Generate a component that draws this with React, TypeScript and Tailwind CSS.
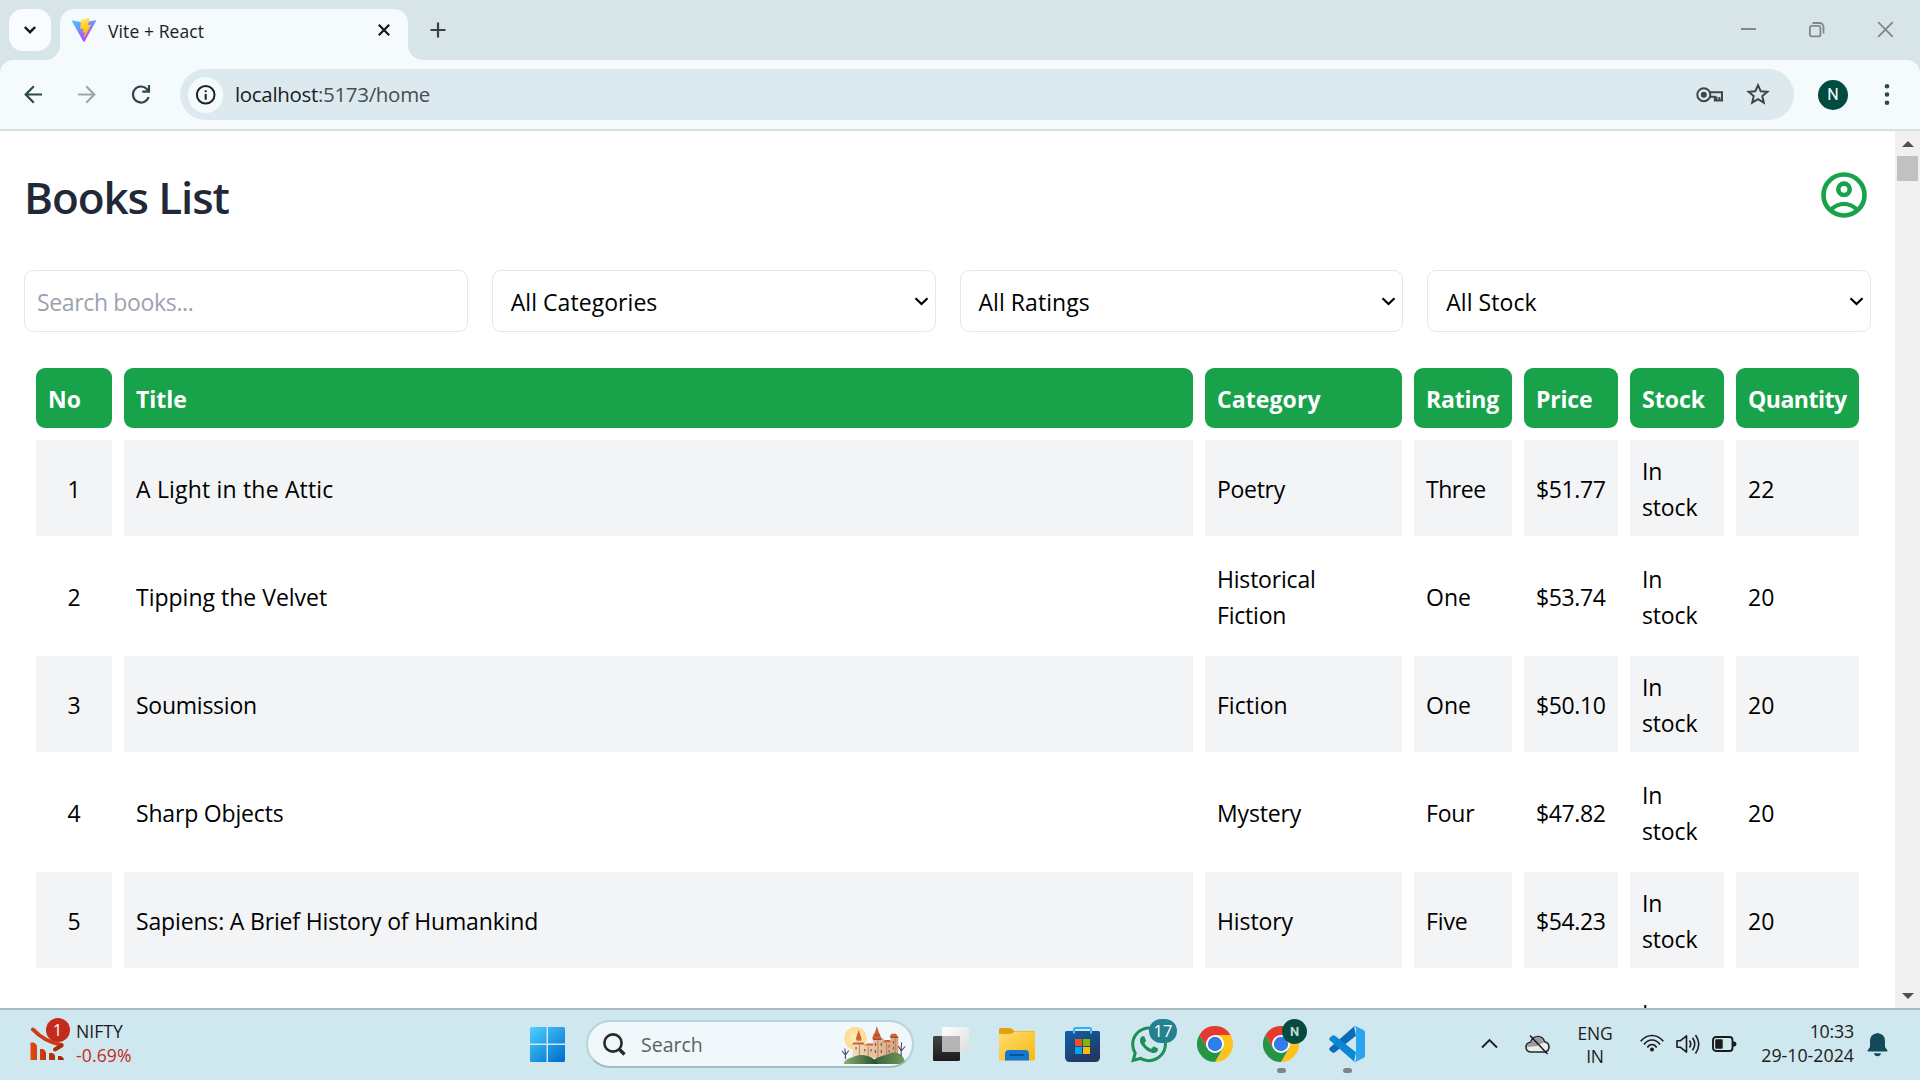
import React from "react";
import { FaWhatsapp } from "react-icons/fa";

type Cell = { text: string; track?: string };
type Book = { title: Cell; category: Cell; rating: Cell; price: string; quantity: string };

const BOOKS: Book[] = [
  { title: { text: "A Light in the Attic", track: "tracking-[0.18px]" }, category: { text: "Poetry", track: "tracking-[-0.3px]" }, rating: { text: "Three", track: "tracking-[-0.45px]" }, price: "$51.77", quantity: "22" },
  { title: { text: "Tipping the Velvet" }, category: { text: "Historical Fiction", track: "tracking-[-0.2px]" }, rating: { text: "One" }, price: "$53.74", quantity: "20" },
  { title: { text: "Soumission", track: "tracking-[-0.25px]" }, category: { text: "Fiction" }, rating: { text: "One" }, price: "$50.10", quantity: "20" },
  { title: { text: "Sharp Objects", track: "tracking-[-0.18px]" }, category: { text: "Mystery", track: "tracking-[-0.15px]" }, rating: { text: "Four", track: "tracking-[-0.2px]" }, price: "$47.82", quantity: "20" },
  { title: { text: "Sapiens: A Brief History of Humankind", track: "tracking-[-0.16px]" }, category: { text: "History", track: "tracking-[-0.1px]" }, rating: { text: "Five", track: "tracking-[-0.1px]" }, price: "$54.23", quantity: "20" },
  { title: { text: "The Requiem Red" }, category: { text: "Young Adult" }, rating: { text: "One" }, price: "$22.65", quantity: "19" },
];

const HEADERS = [
  { label: "No", track: "" },
  { label: "Title", track: "" },
  { label: "Category", track: "tracking-[0.1px]" },
  { label: "Rating", track: "tracking-[-0.2px]" },
  { label: "Price", track: "tracking-[-0.2px]" },
  { label: "Stock", track: "" },
  { label: "Quantity", track: "tracking-[-0.5px]" },
];

function TabStrip() {
  return (
    <div className="flex h-[60px] bg-[#d7e4e8] pl-[9px]">
      <button className="mt-[9px] flex h-[42px] w-[42px] items-center justify-center rounded-[14px] bg-[#f8fcfe]">
        <svg width="14" height="10" viewBox="0 0 14 10" fill="none" stroke="#15181a" strokeWidth="2.4">
          <path d="M1.8 2 7 7.2 12.2 2" />
        </svg>
      </button>
      <div className="relative ml-[9px] mt-[9px] flex h-[51px] w-[348px] items-start rounded-t-[14px] bg-[#f5fafd]">
        <svg className="absolute -left-[15px] bottom-0" width="15" height="15">
          <path d="M15 0V15H0A15 15 0 0 0 15 0Z" fill="#f5fafd" />
        </svg>
        <svg className="absolute -right-[15px] bottom-0" width="15" height="15">
          <path d="M0 0V15H15A15 15 0 0 1 0 0Z" fill="#f5fafd" />
        </svg>
        <svg className="ml-[12px] mt-[9px]" width="24" height="24" viewBox="0 0 24 24">
          <defs>
            <linearGradient id="viteA" x1="0" y1="0" x2="0.6" y2="1">
              <stop offset="0" stopColor="#41d1ff" />
              <stop offset="1" stopColor="#bd34fe" />
            </linearGradient>
            <linearGradient id="viteB" x1="0.4" y1="0" x2="0.6" y2="1">
              <stop offset="0" stopColor="#ffea83" />
              <stop offset="0.2" stopColor="#ffdd35" />
              <stop offset="1" stopColor="#ffa800" />
            </linearGradient>
          </defs>
          <path d="M23.9 3.2 12.5 23.6a.6.6 0 0 1-1.1 0L.1 3.4c-.3-.5.1-1 .6-.9L12 4.500 23.300 2.300c.5-.1.9.4.6.9Z" fill="url(#viteA)" />
          <path d="M17.300.05 9 1.700a.3.3 0 0 0-.25.3l-.5 8.700c0 .2.200.4.4.3l2.300-.5c.2 0 .4.1.4.350L10.700 14.200c0 .2.100.4.350.350l1.400-.4c.25-.1.450.1.400.350l-1.100 5.300c-.1.3.350.5.550.200L19 7.100c.1-.2-.1-.5-.3-.450l-2.400.450c-.2 0-.4-.150-.350-.4L17.500.4c.1-.2 0-.4-.2-.350Z" fill="url(#viteB)" />
        </svg>
        <span className="ml-[12px] mt-[9px] text-[17.5px] leading-[26px] tracking-[0.1px] text-[#1d2022]">Vite + React</span>
        <svg className="absolute left-[318px] top-[15px]" width="12" height="12" viewBox="0 0 12 12" stroke="#15181a" strokeWidth="2.2">
          <path d="M.8.8 11.200 11.200M11.200.8.8 11.200" />
        </svg>
      </div>
      <svg className="ml-[22px] mt-[22px]" width="16" height="16" viewBox="0 0 16 16" stroke="#3a4245" strokeWidth="2.2">
        <path d="M8 .5V15.500M.5 8H15.500" />
      </svg>
      <div className="ml-auto flex pr-[26px] pt-[21px]">
        <svg width="17" height="17" viewBox="0 0 17 17" stroke="#7f898c" strokeWidth="2">
          <path d="M1 8H16" />
        </svg>
        <svg className="ml-[51px]" width="17" height="17" viewBox="0 0 17 17" fill="none" stroke="#7f898c" strokeWidth="1.8">
          <rect x="1.900" y="4.900" width="10.500" height="10.500" rx="2" />
          <path d="M4.500 2H11.500A4 4 0 0 1 15.500 6V12.500" />
        </svg>
        <svg className="ml-[52px]" width="17" height="17" viewBox="0 0 17 17" stroke="#7f898c" strokeWidth="1.8">
          <path d="M1.200 1.200 15.800 15.800M15.800 1.200 1.200 15.800" />
        </svg>
      </div>
    </div>
  );
}

function Toolbar() {
  return (
    <div className="h-[71px] bg-[#d7e4e8]">
      <div className="flex h-[71px] items-start rounded-t-[13px] border-b-2 border-[#d5e1e3] bg-[#f5fafd]">
        <svg className="ml-[24px] mt-[25px]" width="19" height="19" viewBox="0 0 19 19" fill="none" stroke="#2c474d" strokeWidth="2.2">
          <path d="M18 9.500H2M9.800 1.300 1.700 9.500 9.800 17.700" />
        </svg>
        <svg className="ml-[34px] mt-[25px]" width="19" height="19" viewBox="0 0 19 19" fill="none" stroke="#a0a7a9" strokeWidth="2.200">
          <path d="M1 9.500H17M9.200 1.300 17.300 9.500 9.200 17.700" />
        </svg>
        <svg className="ml-[35px] mt-[25px]" width="20" height="20" viewBox="0 0 20 20" fill="none" stroke="#2c474d" strokeWidth="2.200">
          <path d="M17.600 12A8 8 0 1 1 15.800 4L18 6.400M18 0V6.600H11.300" />
        </svg>
        <div className="ml-[29px] mt-[9px] flex h-[51px] w-[1614px] items-center rounded-full bg-[#dceaef] pl-[8px]">
          <div className="flex h-[36px] w-[35px] items-center justify-center rounded-full bg-[#f5fafd]">
            <svg width="20" height="20" viewBox="0 0 20 20" fill="none" stroke="#1c2022" strokeWidth="2">
              <circle cx="9.700" cy="9.800" r="8.800" />
              <path d="M9.700 9V14.800M9.700 5.200V7.200" />
            </svg>
          </div>
          <span className="-mt-[2px] ml-[12px] text-[20.5px] leading-[28px] tracking-[-0.32px] text-[#474d50]">
            <span className="text-[#191c1e]">localhost</span>:5173/home
          </span>
          <svg className="ml-auto" width="28" height="16" viewBox="0 0 28 16" fill="none" stroke="#3d4649" strokeWidth="2">
            <path d="M14 5.200H26V13.600H20.500V9.600M14 9.800H18.800V13.600H21M23.400 10V13" />
            <circle cx="7.800" cy="7.700" r="6.500" />
            <circle cx="7.800" cy="7.700" r="3" fill="#3d4649" stroke="none" />
          </svg>
          <svg className="-mt-[2px] ml-[22px] mr-[24px]" width="24" height="22" viewBox="0 0 24 22" fill="none" stroke="#3d4649" strokeWidth="2">
            <path d="M12 2.200 14.700 8.200 21.400 8.800 16.300 13.100 17.800 19.600 12 16.100 6.200 19.600 7.700 13.100 2.600 8.800 9.300 8.200Z" />
          </svg>
        </div>
        <div className="ml-[24px] mt-[20px] flex h-[30px] w-[30px] items-center justify-center rounded-full bg-[#004d40] font-['Roboto'] text-[16px] leading-[22px] text-white">N</div>
        <svg className="ml-[36px] mt-[23px]" width="6" height="24" viewBox="0 0 6 24" fill="#2c474d">
          <circle cx="3" cy="3.200" r="2.300" />
          <circle cx="3" cy="11.500" r="2.300" />
          <circle cx="3" cy="19.800" r="2.300" />
        </svg>
      </div>
    </div>
  );
}

function FilterSelect({ label }: { label: string }) {
  return (
    <div className="flex h-[62px] items-center justify-between rounded-[9px] border border-[#e5e7eb] pl-[18px] pr-[6px]">
      <span className="pt-px text-[23px] leading-[36px] tracking-[0.05px] text-black">{label}</span>
      <svg width="15" height="9" viewBox="0 0 15 9" fill="none" stroke="#000" strokeWidth="2.200">
        <path d="M1.500 1.200 7.500 7 13.500 1.200" />
      </svg>
    </div>
  );
}

function BooksPage() {
  return (
    <div className="flex h-[877px] overflow-hidden bg-white">
      <main className="w-[1895px] px-6">
        <div className="flex h-[128px] items-center justify-between pr-1">
          <h1 className="pt-[4px] text-[44px] font-semibold leading-[54px] tracking-[-1.1px] text-[#1f2937]">Books List</h1>
          <svg width="46" height="46" viewBox="0 0 46 46" fill="none" stroke="#18a34a">
            <circle cx="23" cy="23" r="20.500" strokeWidth="4.600" />
            <circle cx="23" cy="17.300" r="5.700" strokeWidth="4.600" />
            <path d="M9.500 37.800Q23 26 36.500 37.800" strokeWidth="4.200" />
          </svg>
        </div>
        <div className="mt-[11px] grid grid-cols-4 gap-6">
          <div className="h-[62px] rounded-[9px] border border-[#e5e7eb] px-3 pt-[13px]">
            <input className="h-[36px] w-full text-[23px] tracking-[-0.35px] text-black outline-none placeholder:text-[#9ca3af]" placeholder="Search books..." />
          </div>
          <FilterSelect label="All Categories" />
          <FilterSelect label="All Ratings" />
          <FilterSelect label="All Stock" />
        </div>
        <table className="mt-6 w-[1847px] table-fixed border-separate border-spacing-[12px] text-[23px] leading-[36px] text-black">
          <colgroup>
            <col className="w-[76px]" />
            <col className="w-[1069px]" />
            <col className="w-[197px]" />
            <col className="w-[98px]" />
            <col className="w-[94px]" />
            <col className="w-[94px]" />
            <col className="w-[123px]" />
          </colgroup>
          <thead>
            <tr>
              {HEADERS.map((h) => (
                <th key={h.label} className={`rounded-[9px] bg-[#18a34a] px-3 pb-[11px] pt-[13px] text-left font-bold text-white ${h.track}`}>
                  {h.label}
                </th>
              ))}
            </tr>
          </thead>
          <tbody>
            {BOOKS.map((b, i) => (
              <tr key={b.title.text} className="h-[96px] last:[&>td]:pt-[15px]! [&:nth-child(odd)>td]:bg-[#f3f4f6] [&>td]:px-3 [&>td]:pb-[11px] [&>td]:pt-[13px]">
                <td className="text-center">{i + 1}</td>
                <td className={b.title.track ?? ""}>{b.title.text}</td>
                <td className={b.category.track ?? ""}>{b.category.text}</td>
                <td className={b.rating.track ?? ""}>{b.rating.text}</td>
                <td className="tracking-[-0.4px]">{b.price}</td>
                <td className="tracking-[-0.15px]">In stock</td>
                <td>{b.quantity}</td>
              </tr>
            ))}
          </tbody>
        </table>
      </main>
      <aside className="flex w-[25px] flex-col items-center bg-[#f0f0f0]">
        <svg className="mt-[10px]" width="12" height="6" viewBox="0 0 12 6">
          <path d="M0 6 6 0 12 6Z" fill="#505050" />
        </svg>
        <div className="mt-[9px] h-[25px] w-[21px] bg-[#c1c1c1]" />
        <svg className="mb-[9px] mt-auto" width="12" height="6" viewBox="0 0 12 6">
          <path d="M0 0 6 6 12 0Z" fill="#505050" />
        </svg>
      </aside>
    </div>
  );
}

function ChromeLogo() {
  return (
    <svg width="36" height="36" viewBox="0 0 36 36">
      <path d="M2.410 9A18 18 0 0 1 33.590 9H18V18L10.210 22.500Z" fill="#e33b2e" />
      <path d="M33.590 9A18 18 0 0 1 18 36L25.790 22.500 18 18V9Z" fill="#fcc31e" />
      <path d="M18 36A18 18 0 0 1 2.410 9L10.210 22.500 18 18 25.790 22.500Z" fill="#269445" />
      <circle cx="18" cy="18" r="9" fill="#fff" />
      <circle cx="18" cy="18" r="7.200" fill="#2f7de9" />
    </svg>
  );
}

function Castle() {
  return (
    <svg width="66" height="38" viewBox="0 0 68 38" preserveAspectRatio="none">
      <defs>
        <radialGradient id="sun">
          <stop offset="0" stopColor="#fff0bd" />
          <stop offset="1" stopColor="#fbdb8f" />
        </radialGradient>
        <linearGradient id="wall" x1="0" x2="1">
          <stop offset="0" stopColor="#f6dcb8" />
          <stop offset="1" stopColor="#d6a47c" />
        </linearGradient>
        <linearGradient id="hill" x1="0" x2="1">
          <stop offset="0" stopColor="#8fae6c" />
          <stop offset="1" stopColor="#1f4a30" />
        </linearGradient>
        <linearGradient id="hill2" x1="0" x2="1">
          <stop offset="0" stopColor="#2c5a38" />
          <stop offset="1" stopColor="#6f9a58" />
        </linearGradient>
      </defs>
      <circle cx="15" cy="12.500" r="11.500" fill="url(#sun)" />
      <path d="M12 18H23V32H12ZM16 13H20.500V20H16ZM22 19H33V32H22ZM33 12H44V32H33ZM44 16H53V32H44ZM51 11H59V30H51Z" fill="url(#wall)" />
      <path d="M19 19V32M28 21V32M38 14V32M47 17V32M56 12V30" stroke="#b98560" strokeWidth="1" />
      <path d="M18.200 4 21.500 13.500H15ZM11 18.500 13 16.500H23L24.500 18.500ZM24 19.500 27 17.500H33V19.500ZM32 13 33.500 8.500 35.200 6 36.800 0 39 6 40 8.500 42 13ZM43 16.200 45 14H51V16.200ZM50 11 52 7.800H56.500L59 11Z" fill="#cd6132" />
      <path d="M34 9H40M16 14H21M33 13.500H42M51 11.500H59" stroke="#97452b" strokeWidth="1" />
      <path d="M15.500 21V23.500M24.500 23V25.500M31 23V25.500M35.500 17V20M41.500 17V20M35.500 24V27M41.500 24V27M49.500 19V21.500M49.500 24V26.500M54 15V17.500M54 21V23.500" stroke="#7b5568" strokeWidth="1.200" />
      <path d="M30 38C34 31 43 30 49 28 56 25 62 27 65 33 66 36 62 38 58 38Z" fill="url(#hill2)" />
      <path d="M3 38C3 33 10 32 15 30 24 27 34 31 38 38Z" fill="url(#hill)" />
      <path d="M4.500 33V27M4.500 29 1 25M4.500 29 8 24.500M4.500 27 4 22.500M62 30V22M62 25 59 20M62 25 66 20.500M62 22 62.500 16.500" stroke="#4b3a66" strokeWidth="1.100" fill="none" />
    </svg>
  );
}

function Widget() {
  return (
    <div className="flex w-[510px] items-start">
      <div className="relative ml-[30px] mt-[17px] h-[36px] w-[40px]">
        <svg width="36" height="36" viewBox="0 0 36 36">
          <defs>
            <linearGradient id="bars" x1="0" x2="1">
              <stop offset="0" stopColor="#e2470f" />
              <stop offset="1" stopColor="#9c2610" />
            </linearGradient>
          </defs>
          <path d="M3 2.500C10 10 19 15.500 31.500 18" fill="none" stroke="#cb3d12" strokeWidth="4" strokeLinecap="round" />
          <path d="M31.500 18.500 25 22.500" stroke="#ad2c10" strokeWidth="4" strokeLinecap="round" />
          <path d="M.5 15.500H3.500Q7 17 7 20V33H.5ZM10 22H13Q16 23.500 16 26V33H10ZM19 26H22Q25 27 25 29.500V33H19ZM28 29H31Q34 30.500 34 33H28Z" fill="url(#bars)" />
        </svg>
        <span className="absolute left-[15.500px] top-[-9.500px] flex h-[24px] w-[24px] items-center justify-center rounded-full bg-[#c42b1c] text-[16px] leading-[22px] text-white">1</span>
      </div>
      <div className="ml-[6px] mt-[9px] text-[17.600px] leading-[24px]">
        <div className="text-[#1a1c1d]">NIFTY</div>
        <div className="tracking-[0.100px] text-[#c42b1c]">-0.69%</div>
      </div>
    </div>
  );
}

function Slot({ children, running }: { children: React.ReactNode; running?: boolean }) {
  return (
    <div className="relative flex h-full w-[66px] justify-center pt-[16px]">
      {children}
      {running && <span className="absolute bottom-[7px] left-[29px] h-[5px] w-[9px] rounded-full bg-[#7c8688]" />}
    </div>
  );
}

function Taskbar() {
  return (
    <footer className="flex h-[72px] border-t-2 border-[#a9b8bc] bg-[#cfe7ee]">
      <Widget />
      <svg className="ml-[20px] mt-[17px]" width="35" height="35" viewBox="0 0 35 35">
        <defs>
          <linearGradient id="win" gradientUnits="userSpaceOnUse" x1="0" y1="0" x2="30" y2="35">
            <stop offset="0" stopColor="#4fd0ff" />
            <stop offset="1" stopColor="#0072cf" />
          </linearGradient>
        </defs>
        <path d="M1.500 0H16.500V16.500H0V1.500Q0 0 1.500 0ZM18 0H33.500Q35 0 35 1.500V16.500H18ZM0 18H16.500V35H1.500Q0 35 0 33.500ZM18 18H35V33.500Q35 35 33.500 35H18Z" fill="url(#win)" />
      </svg>
      <div className="ml-[21px] mt-[10px] flex h-[48px] w-[328px] items-center rounded-full border-2 border-b-[#a3bbc1] border-l-[#b9d2d8] border-r-[#b9d2d8] border-t-[#b9d5dc] bg-[#f0f8fb]">
        <svg className="ml-[15px]" width="23" height="23" viewBox="0 0 23 23" fill="none" stroke="#27292a" strokeWidth="2.600">
          <circle cx="10" cy="10" r="8.600" />
          <path d="M16 16 21.500 21.500" strokeWidth="3.400" />
        </svg>
        <span className="ml-[15px] mt-px text-[19.500px] leading-[28px] text-[#5b6163]">Search</span>
        <div className="ml-auto mr-[5px] pt-[1px]">
          <Castle />
        </div>
      </div>
      <div className="ml-[4px] flex">
        <Slot>
          <svg width="36" height="36" viewBox="0 0 36 36">
            <defs>
              <linearGradient id="tvA" x1="0" y1="0" x2="0" y2="1">
                <stop offset="0" stopColor="#444" />
                <stop offset="1" stopColor="#1b1b1b" />
              </linearGradient>
              <linearGradient id="tvB" x1="0" y1="0" x2="1" y2="1">
                <stop offset="0" stopColor="#fff" />
                <stop offset="1" stopColor="#dcdcdc" />
              </linearGradient>
            </defs>
            <rect x="0" y="10" width="27" height="25" rx="1.500" fill="url(#tvA)" />
            <rect x="9" y="1" width="27" height="25" rx="1.500" fill="url(#tvB)" />
            <path d="M9 10H27V26H10.500Q9 26 9 24.500Z" fill="#b5b5b5" />
          </svg>
        </Slot>
        <Slot>
          <svg width="36" height="36" viewBox="0 0 36 36">
            <defs>
              <linearGradient id="fold" x1="0" y1="0" x2="1" y2="1">
                <stop offset="0" stopColor="#ffdc73" />
                <stop offset="1" stopColor="#f8b90c" />
              </linearGradient>
            </defs>
            <path d="M0 3.500Q0 2 1.500 2H10.500Q12 2 13 3L15.500 5H34.500Q36 5 36 6.500V12H0Z" fill="#e0a30e" />
            <path d="M0 8H11Q12.500 8 13.500 7L15.500 5.500H34.500Q36 5.500 36 7V32.500Q36 34.500 34.500 34.500H1.500Q0 34.500 0 33Z" fill="url(#fold)" />
            <path d="M6 34.500V28Q6 24 10 24H26Q30 24 30 28V34.500Z" fill="#1279cf" />
            <path d="M11.500 29H24.500" stroke="#07539a" strokeWidth="2" strokeLinecap="round" />
          </svg>
        </Slot>
        <Slot>
          <svg className="mr-[1px]" width="35" height="36" viewBox="0 0 35 36">
            <defs>
              <linearGradient id="store" x1="0" y1="0" x2="0.600" y2="1">
                <stop offset="0" stopColor="#0f61ae" />
                <stop offset="1" stopColor="#23375f" />
              </linearGradient>
            </defs>
            <path d="M9 8V3.500Q9 2 10.500 2H24.500Q26 2 26 3.500V8" fill="none" stroke="#2fb4ee" strokeWidth="2" />
            <path d="M0 6.500Q0 5 1.500 5H33.500Q35 5 35 6.500V31Q35 36 30 36H5Q0 36 0 31Z" fill="url(#store)" />
            <path d="M9 5V7.500M26 5V7.500" stroke="#4cc4f5" strokeWidth="2" />
            <path d="M10 13H17V20H10Z" fill="#f25022" />
            <path d="M18 13H25V20H18Z" fill="#7fba00" />
            <path d="M10 21H17V28H10Z" fill="#00a4ef" />
            <path d="M18 21H25V28H18Z" fill="#ffb900" />
          </svg>
        </Slot>
        <Slot>
          <FaWhatsapp className="-mt-[2.5px] h-[41px] w-[36px] shrink-0 text-[#1d8f57]" />
          <span className="absolute left-[33px] top-[9px] flex h-[24px] w-[28px] items-center justify-center rounded-full bg-[#25808f] text-[16.500px] leading-[22px] text-white">17</span>
        </Slot>
        <Slot>
          <ChromeLogo />
        </Slot>
        <Slot running>
          <ChromeLogo />
          <span className="absolute left-[34px] top-[9px] flex h-[25px] w-[25px] items-center justify-center rounded-full bg-[#054c40] font-['Roboto'] text-[13px] font-bold leading-[18px] text-[#c5d8d5]">N</span>
        </Slot>
        <Slot running>
          <svg width="36" height="36" viewBox="0 0 36 36">
            <path d="M25 .5 27 9.800 6 26.200Q4.500 27.200 3 26.200L.8 24.200Q-.4 23 .8 21.800Z" fill="#0b6cb5" />
            <path d="M25 35.500 27 26.200 6 9.800Q4.500 8.800 3 9.800L.8 11.800Q-.4 13 .8 14.200Z" fill="#0c87d4" />
            <path d="M26.300 0 34.500 3.900Q36 4.700 36 6.300V29.700Q36 31.300 34.500 32.100L26.300 36Q24.800 36.300 24.300 35.300 27 36.300 27 33V3Q27-.3 24.300.7 24.800-.3 26.300 0Z" fill="#2aa5ee" />
          </svg>
        </Slot>
      </div>
      <div className="ml-auto flex items-start pr-[32px]">
        <svg className="mt-[28px]" width="17" height="11" viewBox="0 0 17 11" fill="none" stroke="#1a1c1d" strokeWidth="1.900">
          <path d="M1 9.500 8.500 2 16 9.500" />
        </svg>
        <svg className="ml-[27px] mt-[24px]" width="25" height="21" viewBox="0 0 25 21" fill="none">
          <path d="M5.500 18Q1 17.500 1 13 1.200 9 5.500 8.300 7.500 2.500 13 2.500 18 2.600 19.500 7.800 24 8.500 24 13 23.800 17.500 19.500 18Z" fill="#ececec" stroke="#26292a" strokeWidth="1.600" />
          <path d="M2.200 13Q2.500 9.500 6 9.200 8 3.500 13 3.500 17 3.600 18.500 8.800L12 12Z" fill="#9a9a9a" />
          <path d="M5 1.500 22.500 20" stroke="#1a1c1d" strokeWidth="1.500" />
        </svg>
        <div className="ml-[27px] mt-[12px] w-[36px] text-center text-[17.500px] leading-[23px] tracking-[-0.200px] text-[#1a1c1d]">
          <div>ENG</div>
          <div>IN</div>
        </div>
        <svg className="ml-[27px] mt-[24px]" width="24" height="18" viewBox="0 0 24 18" fill="none" stroke="#1a1c1d" strokeWidth="1.700">
          <path d="M.7 7.200Q5.500 1.500 12 1.500T23.300 7.200M4 10.500Q7.300 6 12 6T20 10.500M7.300 13.500Q9.200 10.500 12 10.500T16.700 13.500" />
          <circle cx="12" cy="15.600" r="2" fill="#1a1c1d" stroke="none" />
        </svg>
        <svg className="ml-[12px] mt-[24px]" width="24" height="21" viewBox="0 0 24 21" fill="none" stroke="#1a1c1d" strokeWidth="1.600" strokeLinejoin="round">
          <path d="M1 6.700H4.500L10.500 1.800V18.200L4.500 13.300H1Z" />
          <path d="M13.500 6.500Q16 10 13.500 13.500M16.500 3.800Q21 10 16.500 16.200M19.500 1Q26 10 19.500 19.500" />
        </svg>
        <svg className="ml-[12px] mt-[26px]" width="25" height="16" viewBox="0 0 25 16">
          <rect x="1" y="1" width="19.500" height="14" rx="3" fill="none" stroke="#1a1c1d" strokeWidth="1.900" />
          <rect x="3.200" y="3.300" width="7.500" height="9.400" rx="1" fill="#1a1c1d" />
          <path d="M21 5.500H22.500Q24.500 6 24.500 8T22.500 10.500H21Z" fill="#1a1c1d" />
        </svg>
        <div className="ml-[20px] mt-[9px] w-[97px] text-right text-[17.800px] leading-[24px] text-[#1a1c1d]">
          <div className="tracking-[-0.200px]">10:33</div>
          <div>29-10-2024</div>
        </div>
        <svg className="ml-[13px] mt-[23px]" width="21" height="24" viewBox="0 0 21 24" fill="#124a5c">
          <path d="M10.500 0Q18 1 18 8V14L20.500 17.500Q20.500 18.500 19.500 18.500H1.500Q.5 18.500.5 17.500L3 14V8Q3 1 10.500 0Z" />
          <path d="M7 20.200H14Q13.500 23.200 10.500 23.200T7 20.200Z" />
        </svg>
      </div>
    </footer>
  );
}

export default function App() {
  return (
    <div className="flex h-[1080px] w-[1920px] flex-col overflow-hidden bg-white font-['Open_Sans','Noto_Sans',sans-serif]">
      <TabStrip />
      <Toolbar />
      <BooksPage />
      <Taskbar />
    </div>
  );
}
